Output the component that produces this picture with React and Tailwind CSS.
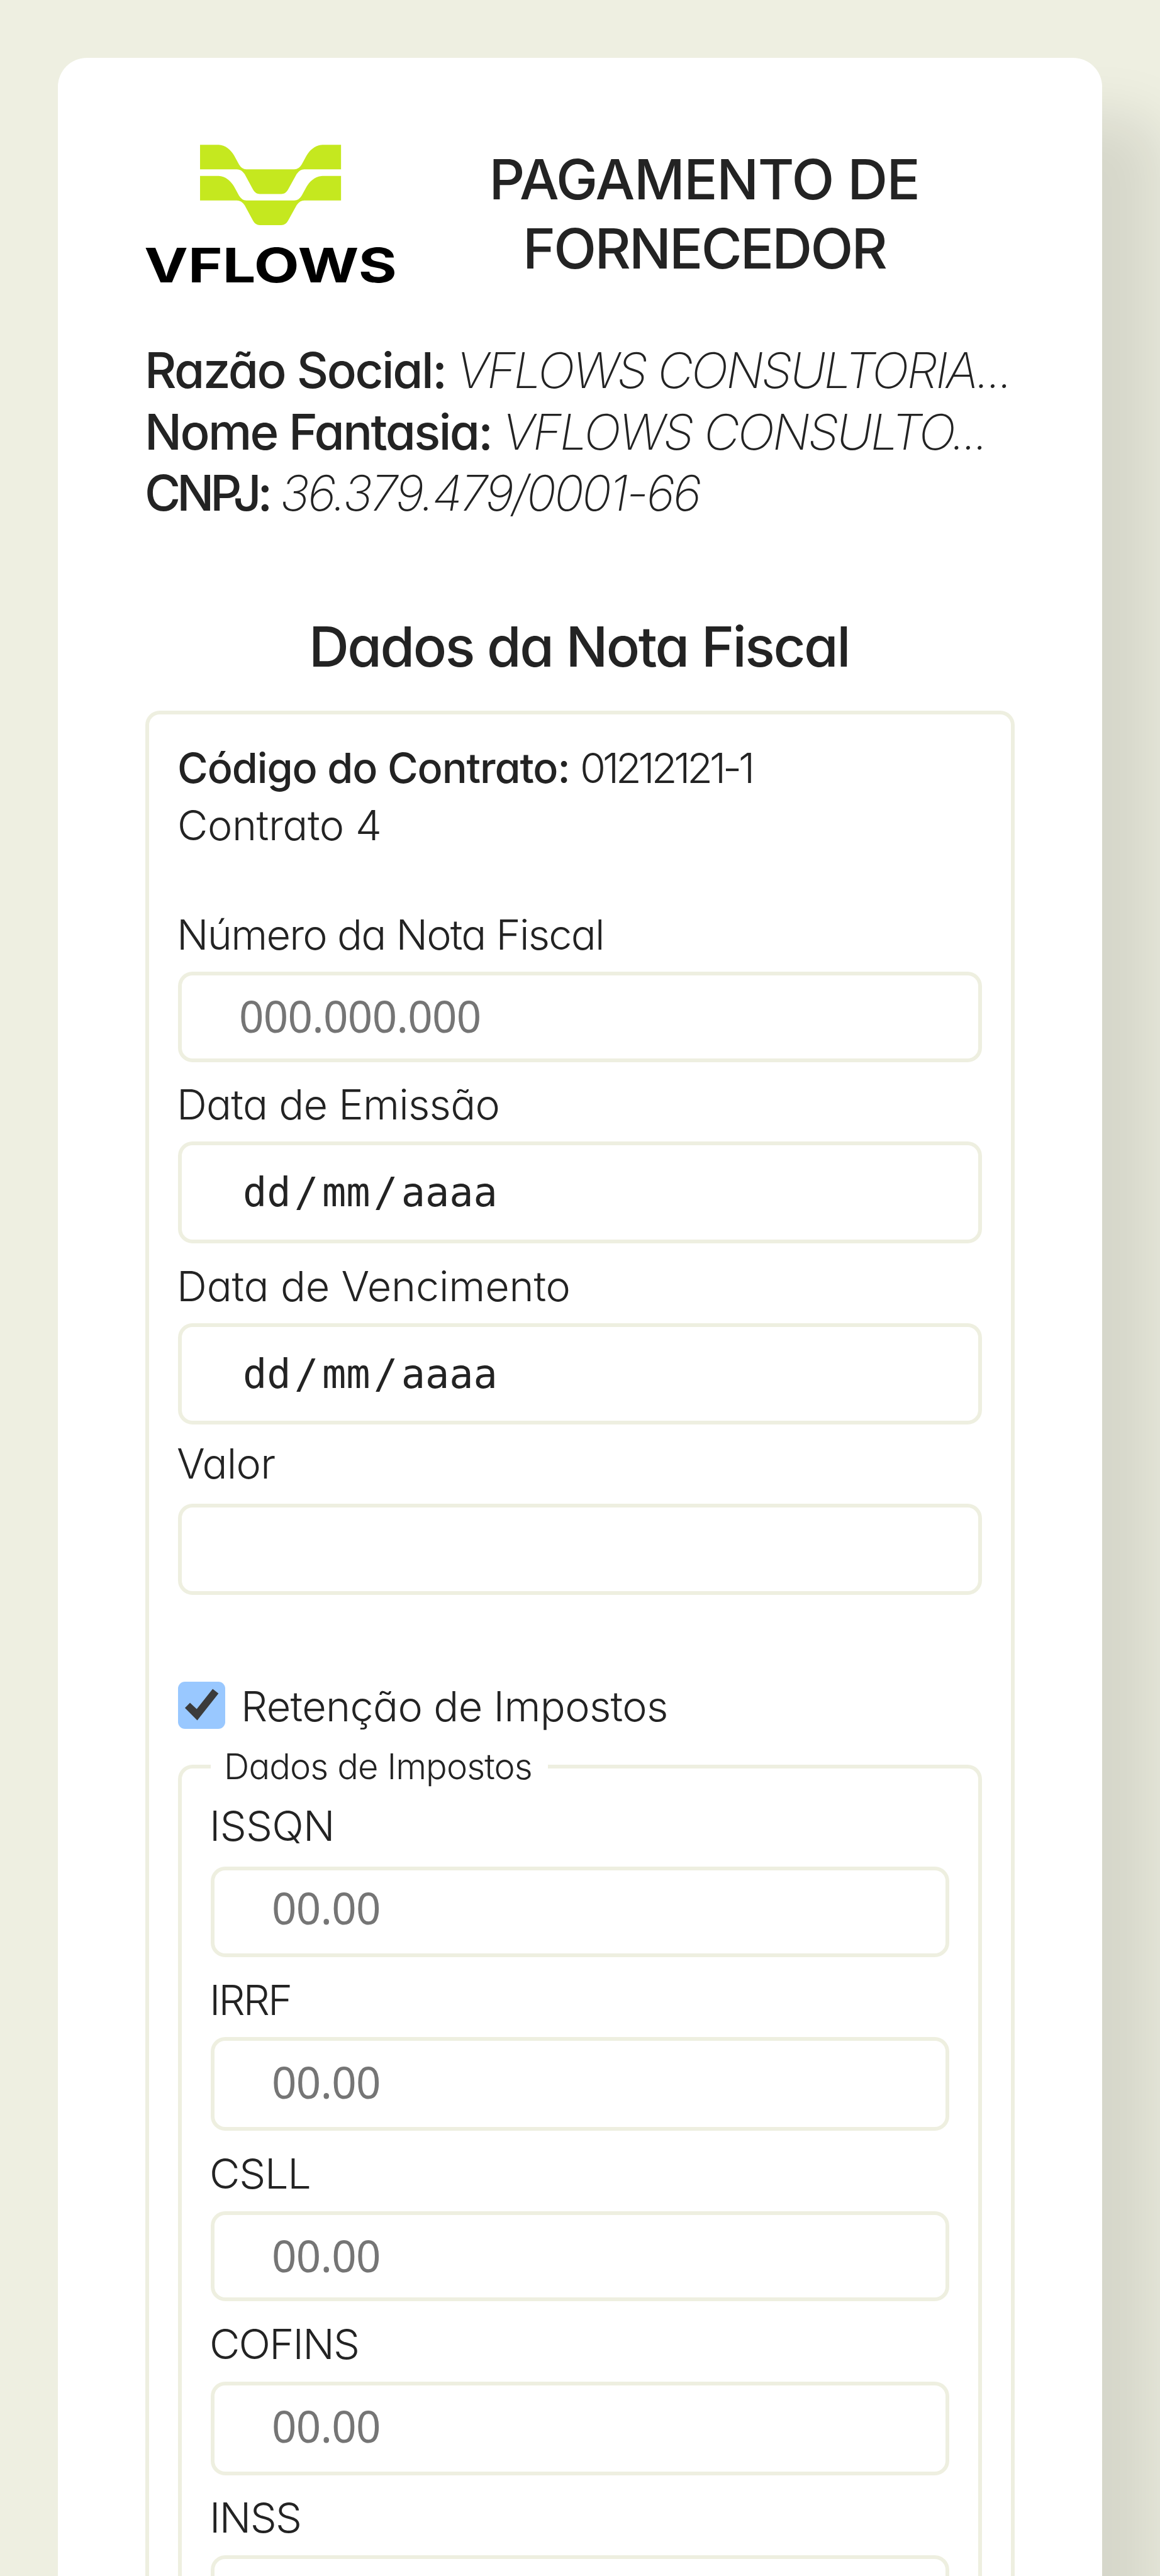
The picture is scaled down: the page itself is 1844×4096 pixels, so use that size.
function Logo() {
  return (
    <svg className="h-[221px] w-[399px] shrink-0 overflow-visible" viewBox="80 80 1385 767" fill="none">
      <g fill="#c5e81f">
        <path d="M382 81H485C520 81 553 110 570 140L597 189Q613 216 637 216H902Q927 216 943 189L970 140C987 110 1020 81 1058 81H1160V216H957Q933 216 915 242L868 327Q855 352 830 352H712Q687 352 674 327L628 242Q610 216 585 216H382Z" />
        <path d="M382 253H485C520 253 553 282 570 312L597 361Q613 388 637 388H902Q927 388 943 361L970 312C987 282 1020 253 1058 253H1160V388H957Q933 388 915 414L868 499Q855 524 830 524H712Q687 524 674 499L628 414Q610 388 585 388H382Z" />
      </g>
      <text x="74" y="840" fill="#000" fontFamily="Inter, sans-serif" fontWeight="700" fontSize="261" textLength="1394" lengthAdjust="spacingAndGlyphs">VFLOWS</text>
    </svg>
  );
}

const box =
  "block w-full rounded-[23px] border-[6px] border-[#eeefe0] bg-white pl-[91px] font-['Noto_Sans',sans-serif] text-[69px] font-normal tracking-[-0.7px] text-[#232323] placeholder:text-[#757575] placeholder:opacity-100 outline-none";

const dateBox =
  "flex w-full items-center gap-[5.5px] rounded-[23px] border-[6px] border-[#eeefe0] bg-white pt-[3px] pl-[97px] font-['DejaVu_Sans_Mono',monospace] text-[63.6px] leading-none font-normal";

function DateBox({ className }) {
  return (
    <div className={`${dateBox} ${className}`}>
      <span>dd</span>
      <span>/</span>
      <span>mm</span>
      <span>/</span>
      <span>aaaa</span>
    </div>
  );
}

function Label({ children, className }) {
  return <label className={`-ml-[2px] block text-[66.5px] leading-[87px] whitespace-nowrap ${className}`}>{children}</label>;
}

export default function App() {
  return (
    <div className="h-[4096px] w-[1844px] overflow-hidden bg-[#eeefe1] px-[92px] pt-[92px] font-['Inter',sans-serif] font-light text-[#232323] [font-feature-settings:'cv11']">
      <main className="h-[4200px] w-[1660px] rounded-[46px] bg-white px-[139px] pt-[138px] shadow-[92px_92px_92px_rgba(0,0,0,0.1)]">
        <header className="flex h-[221px] items-start">
          <Logo />
          <h1 className="flex-1 pr-[4px] text-center text-[88.5px] leading-[110px] font-medium">
            <span className="tracking-[-1.4px]">PAGAMENTO DE</span>
            <br />
            <span className="tracking-[-2.8px]">FORNECEDOR</span>
          </h1>
        </header>

        <section className="mt-[89px] -ml-[1px] text-[78px] leading-[97.5px] whitespace-nowrap">
          <p>
            <b className="inline-block w-[496px] font-medium tracking-[-2.4px]">Razão Social:</b>
            <i className="font-[150] tracking-[-3.2px]">VFLOWS CONSULTORIA...</i>
          </p>
          <p>
            <b className="inline-block w-[569px] font-medium tracking-[-2.6px]">Nome Fantasia:</b>
            <i className="font-[150] tracking-[-3.1px]">VFLOWS CONSULTO...</i>
          </p>
          <p>
            <b className="inline-block w-[215px] font-medium tracking-[-6px]">CNPJ:</b>
            <i className="font-[150] tracking-[-3.05px]">36.379.479/0001-66</i>
          </p>
        </section>

        <h2 className="mt-[140px] pr-[3px] text-center text-[88.5px] leading-[110px] font-medium tracking-[-2.5px]">
          Dados da Nota Fiscal
        </h2>

        <section className="mt-[47px] h-[3200px] rounded-[23px] border-[6px] border-[#eeefe0] px-[46px] pt-[40px]">
          <p className="-ml-[1px] text-[66.5px] leading-[91px] whitespace-nowrap">
            <b className="inline-block w-[640px] font-medium tracking-[-1.1px]">Código do Contrato:</b>
            <span className="tracking-[-5.15px]">01212121-1</span>
          </p>
          <p className="-ml-[1px] text-[66.5px] leading-[91px] tracking-[-0.45px]">Contrato 4</p>

          <Label className="mt-[85px] tracking-[-1.75px]">Número da Nota Fiscal</Label>
          <input className={`${box} mt-[15px] h-[144px] pb-[3px]`} placeholder="000.000.000" />
          <Label className="mt-[24px] tracking-[-0.75px]">Data de Emissão</Label>
          <DateBox className="mt-[15px] h-[162px]" />
          <Label className="mt-[25px] tracking-[-0.2px]">Data de Vencimento</Label>
          <DateBox className="mt-[15px] h-[161px]" />
          <Label className="mt-[19px] tracking-[-0.8px]">Valor</Label>
          <input className={`${box} mt-[20px] h-[145px]`} />

          <label className="mt-[138px] flex h-[76px] items-center text-[66.5px] tracking-[-0.65px]">
            <svg className="size-[75px] rounded-[11px] bg-[#99c8ff]" viewBox="0 0 260 260">
              <path fill="#3b3b3b" d="M38 145 66 116 103 151 191 40 223 65 106 213Z" />
            </svg>
            <span className="pt-[3px] pl-[25px] leading-[87px]">Retenção de Impostos</span>
          </label>

          <fieldset className="mt-[25px] h-[2000px] rounded-[23px] border-[6px] border-[#eeefe0] px-[46px]">
            <legend className="w-[536px] pl-[21px] text-[56px] leading-[69px] tracking-[-0.9px]">Dados de Impostos</legend>
            <Label className="mt-[16px] tracking-[-0.74px]">ISSQN</Label>
            <input className={`${box} mt-[21px] h-[144px] pb-[13px]`} placeholder="00.00" />
            <Label className="mt-[25px] tracking-[-2.94px]">IRRF</Label>
            <input className={`${box} mt-[15px] h-[149px] pb-[7px]`} placeholder="00.00" />
            <Label className="mt-[25px] tracking-[-1.2px]">CSLL</Label>
            <input className={`${box} mt-[16px] h-[143px] pb-[2px]`} placeholder="00.00" />
            <Label className="mt-[25px] tracking-[-1.8px]">COFINS</Label>
            <input className={`${box} mt-[16px] h-[149px] pb-[8px]`} placeholder="00.00" />
            <Label className="mt-[24px] tracking-[-1.65px]">INSS</Label>
            <input className={`${box} mt-[16px] h-[149px] pb-[8px]`} placeholder="00.00" />
          </fieldset>
        </section>
      </main>
    </div>
  );
}
